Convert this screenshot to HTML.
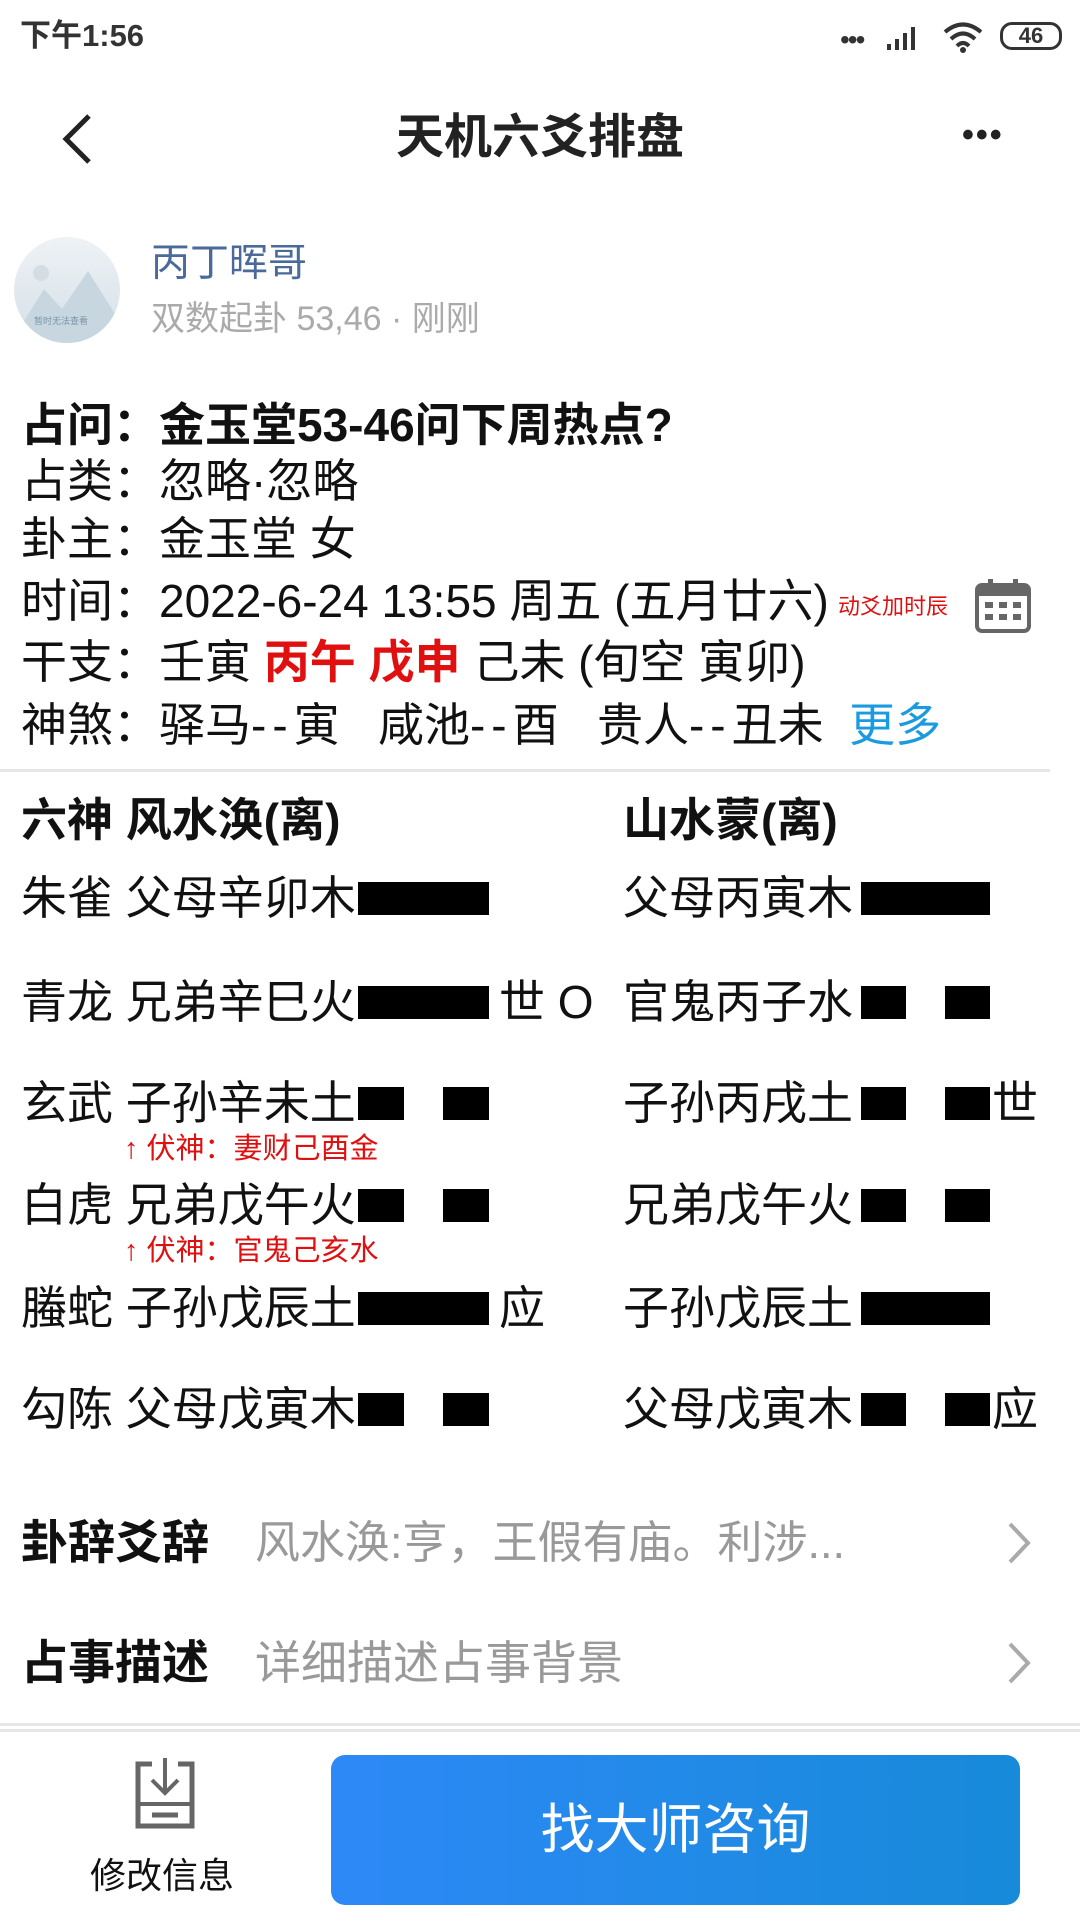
<!DOCTYPE html>
<html><head><meta charset="utf-8">
<style>
*{margin:0;padding:0;box-sizing:border-box}
body{width:1080px;height:1920px;background:#fff;position:relative;overflow:hidden;font-family:"Liberation Sans","Noto Sans CJK SC",sans-serif;color:#111}
.a{position:absolute;white-space:nowrap;line-height:1}
.t{font-size:46px}
.bar{position:absolute;background:#000;height:33px}
.red{color:#e01010}
</style></head><body>
<div class="a" style="left:20px;top:20px;font-size:31px;font-weight:bold;color:#333">下午1:56</div>
<div class="a" style="left:840px;top:26px;font-size:28px;color:#333;letter-spacing:-2px">•••</div>
<svg class="a" style="left:885px;top:24px" width="40" height="28"><rect x="2" y="20" width="4" height="6" fill="#333"/><rect x="10" y="15" width="4" height="11" fill="#333"/><rect x="18" y="9" width="4" height="17" fill="#333"/><rect x="26" y="3" width="4" height="23" fill="#333"/></svg>
<svg class="a" style="left:942px;top:20px" width="42" height="34"><path d="M3 12 Q21 -3 39 12" stroke="#333" stroke-width="4" fill="none"/><path d="M9 19 Q21 8 33 19" stroke="#333" stroke-width="4" fill="none"/><path d="M15 26 Q21 20 27 26" stroke="#333" stroke-width="4" fill="none"/><circle cx="21" cy="30" r="3" fill="#333"/></svg>
<div class="a" style="left:1000px;top:22px;width:62px;height:28px;border:3px solid #333;border-radius:12px;font-size:22px;font-weight:bold;text-align:center;line-height:22px;color:#333">46</div>
<svg class="a" style="left:56px;top:112px" width="40" height="54"><path d="M33 4 L10 27 L33 50" stroke="#222" stroke-width="5" fill="none"/></svg>
<div class="a" style="left:0;width:1080px;text-align:center;top:114px;font-size:48px;font-weight:bold;color:#222">天机六爻排盘</div>
<div class="a" style="left:962px;top:118px;font-size:34px;font-weight:bold;color:#222;letter-spacing:2px">•••</div>
<div class="a" style="left:14px;top:237px;width:106px;height:106px;border-radius:50%;background:linear-gradient(#eef2f5,#d4e0e8);overflow:hidden">
<svg width="106" height="106"><circle cx="27" cy="36" r="8" fill="#d4dde4"/><path d="M0 100 L30 52 L48 72 L74 34 L106 85 L106 106 L0 106Z" fill="#c8d6e0"/></svg>
<div class="a" style="left:20px;top:80px;font-size:9px;color:#7a94a8">暂时无法查看</div></div>
<div class="a" style="left:151px;top:244px;font-size:39px;color:#4a6a9a">丙丁晖哥</div>
<div class="a" style="left:151px;top:302px;font-size:34px;color:#aaa">双数起卦 53,46 · 刚刚</div>
<div class="a t" style="left:21px;top:402px;font-weight:bold">占问：金玉堂53-46问下周热点?</div>
<div class="a t" style="left:21px;top:458px">占类：忽略·忽略</div>
<div class="a t" style="left:21px;top:516px">卦主：金玉堂 女</div>
<div class="a t" style="left:21px;top:578px">时间：2022-6-24 13:55 周五 (五月廿六)</div>
<div class="a red" style="left:838px;top:596px;font-size:22px">动爻加时辰</div>
<svg class="a" style="left:974px;top:578px" width="58" height="56"><rect x="3" y="7" width="52" height="46" rx="5" fill="none" stroke="#666" stroke-width="4"/><rect x="3" y="7" width="52" height="11" fill="#666"/><rect x="14" y="1" width="5" height="10" fill="#666"/><rect x="39" y="1" width="5" height="10" fill="#666"/><g fill="#666"><rect x="11" y="24" width="8" height="6"/><rect x="25" y="24" width="8" height="6"/><rect x="39" y="24" width="8" height="6"/><rect x="11" y="36" width="8" height="6"/><rect x="25" y="36" width="8" height="6"/><rect x="39" y="36" width="8" height="6"/></g></svg>
<div class="a t" style="left:21px;top:639px">干支：壬寅 <b class="red">丙午 戊申</b> 己未 (旬空 寅卯)</div>
<div class="a t" style="left:21px;top:702px">神煞：驿马<span style="letter-spacing:6px">--</span>寅&nbsp;&nbsp; 咸池<span style="letter-spacing:6px">--</span>酉&nbsp;&nbsp; 贵人<span style="letter-spacing:6px">--</span>丑未&nbsp; <span style="color:#1a9be0">更多</span></div>
<div class="a" style="left:0;top:769px;width:1050px;height:3px;background:#e6e6e6"></div>
<div class="a t" style="left:21px;top:797px;font-weight:bold">六神 风水涣(离)</div>
<div class="a t" style="left:623px;top:797px;font-weight:bold">山水蒙(离)</div>

<div class="a t" style="left:21px;top:875px">朱雀 父母辛卯木</div><div class="bar" style="left:358px;top:882px;width:131px"></div>
<div class="a t" style="left:623px;top:875px">父母丙寅木</div><div class="bar" style="left:861px;top:882px;width:129px"></div>

<div class="a t" style="left:21px;top:979px">青龙 兄弟辛巳火</div><div class="bar" style="left:358px;top:986px;width:131px"></div><div class="a t" style="left:499px;top:979px">世 O</div>
<div class="a t" style="left:623px;top:979px">官鬼丙子水</div><div class="bar" style="left:861px;top:986px;width:45px"></div><div class="bar" style="left:945px;top:986px;width:45px"></div>

<div class="a t" style="left:21px;top:1080px">玄武 子孙辛未土</div><div class="bar" style="left:358px;top:1087px;width:46px"></div><div class="bar" style="left:443px;top:1087px;width:46px"></div>
<div class="a t" style="left:623px;top:1080px">子孙丙戌土</div><div class="bar" style="left:861px;top:1087px;width:45px"></div><div class="bar" style="left:945px;top:1087px;width:45px"></div><div class="a t" style="left:992px;top:1080px">世</div>
<div class="a red" style="left:124px;top:1135px;font-size:29px">↑ 伏神：妻财己酉金</div>

<div class="a t" style="left:21px;top:1182px">白虎 兄弟戊午火</div><div class="bar" style="left:358px;top:1189px;width:46px"></div><div class="bar" style="left:443px;top:1189px;width:46px"></div>
<div class="a t" style="left:623px;top:1182px">兄弟戊午火</div><div class="bar" style="left:861px;top:1189px;width:45px"></div><div class="bar" style="left:945px;top:1189px;width:45px"></div>
<div class="a red" style="left:124px;top:1237px;font-size:29px">↑ 伏神：官鬼己亥水</div>

<div class="a t" style="left:21px;top:1285px">螣蛇 子孙戊辰土</div><div class="bar" style="left:358px;top:1292px;width:131px"></div><div class="a t" style="left:499px;top:1285px">应</div>
<div class="a t" style="left:623px;top:1285px">子孙戊辰土</div><div class="bar" style="left:861px;top:1292px;width:129px"></div>

<div class="a t" style="left:21px;top:1386px">勾陈 父母戊寅木</div><div class="bar" style="left:358px;top:1393px;width:46px"></div><div class="bar" style="left:443px;top:1393px;width:46px"></div>
<div class="a t" style="left:623px;top:1386px">父母戊寅木</div><div class="bar" style="left:861px;top:1393px;width:45px"></div><div class="bar" style="left:945px;top:1393px;width:45px"></div><div class="a t" style="left:992px;top:1386px">应</div>

<div class="a" style="left:21px;top:1519px;font-size:47px;font-weight:bold">卦辞爻辞</div>
<div class="a" style="left:255px;top:1520px;font-size:45px;color:#999">风水涣:亨，王假有庙。利涉...</div>
<svg class="a" style="left:1004px;top:1520px" width="30" height="46"><path d="M6 4 L24 23 L6 42" stroke="#aaa" stroke-width="4" fill="none"/></svg>
<div class="a" style="left:21px;top:1639px;font-size:47px;font-weight:bold">占事描述</div>
<div class="a" style="left:255px;top:1640px;font-size:46px;color:#999">详细描述占事背景</div>
<svg class="a" style="left:1004px;top:1640px" width="30" height="46"><path d="M6 4 L24 23 L6 42" stroke="#aaa" stroke-width="4" fill="none"/></svg>
<div class="a" style="left:0;top:1723px;width:1080px;height:3px;background:#e6e6e6"></div>
<div class="a" style="left:0;top:1729px;width:1080px;height:3px;background:#e6e6e6"></div>
<svg class="a" style="left:130px;top:1756px" width="70" height="76"><path d="M22 8 H8 V70 H62 V8 H48" stroke="#666" stroke-width="5" fill="none"/><path d="M35 2 V36 M22 24 L35 37 L48 24" stroke="#666" stroke-width="4" fill="none"/><path d="M8 48 H62" stroke="#666" stroke-width="4"/><path d="M22 59 H48" stroke="#666" stroke-width="5"/></svg>
<div class="a" style="left:90px;top:1858px;font-size:36px">修改信息</div>
<div class="a" style="left:331px;top:1755px;width:689px;height:150px;border-radius:14px;background:linear-gradient(90deg,#2d89f7,#178ad9);color:#fff;font-size:54px;text-align:center;line-height:150px">找大师咨询</div>
</body></html>
